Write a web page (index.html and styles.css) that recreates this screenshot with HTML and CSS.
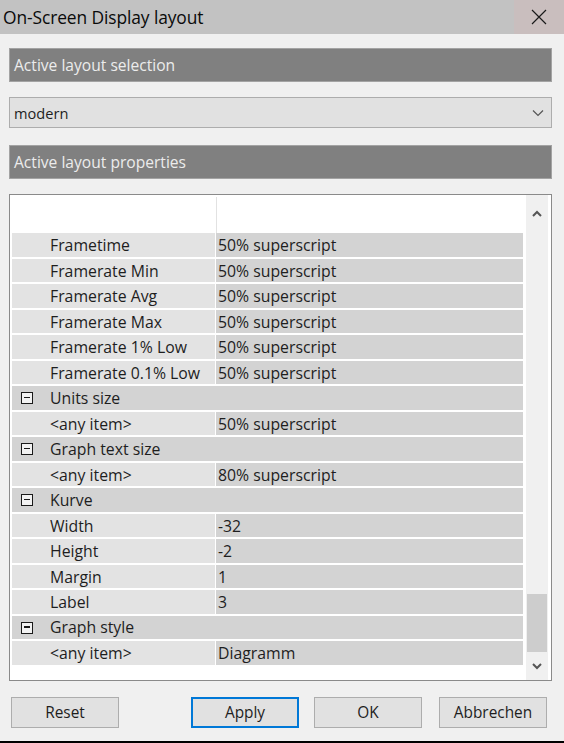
FILE: index.html
```html
<!DOCTYPE html>
<html>
<head>
<meta charset="utf-8">
<link rel="stylesheet" href="styles.css">
</head>
<body>
<div class="window">
  <div class="titlebar">
    <div class="title">On-Screen Display layout</div>
    <div class="close">
      <svg width="16" height="16" viewBox="0 0 16 16"><path d="M1 1 L15 15 M15 1 L1 15" stroke="#1a1a1a" stroke-width="1.2" fill="none"/></svg>
    </div>
  </div>
  <div class="content">
    <div class="section-header">Active layout selection</div>
    <div class="combo">
      <span class="combo-text">modern</span>
      <svg class="chev" width="12" height="8" viewBox="0 0 12 8"><path d="M1 1.5 L6 6.5 L11 1.5" stroke="#555" stroke-width="1.2" fill="none"/></svg>
    </div>
    <div class="section-header">Active layout properties</div>
    <div class="grid-box">
      <div class="rows">
        <div class="head-row"><div class="head-l"></div><div class="head-r"></div></div>
        <div class="row"><div class="lbl">Frametime</div><div class="val">50% superscript</div></div>
        <div class="row"><div class="lbl">Framerate Min</div><div class="val">50% superscript</div></div>
        <div class="row"><div class="lbl">Framerate Avg</div><div class="val">50% superscript</div></div>
        <div class="row"><div class="lbl">Framerate Max</div><div class="val">50% superscript</div></div>
        <div class="row"><div class="lbl">Framerate 1% Low</div><div class="val">50% superscript</div></div>
        <div class="row"><div class="lbl">Framerate 0.1% Low</div><div class="val">50% superscript</div></div>
        <div class="row group"><span class="exp"></span><span class="gname">Units size</span></div>
        <div class="row"><div class="lbl">&lt;any item&gt;</div><div class="val">50% superscript</div></div>
        <div class="row group"><span class="exp"></span><span class="gname">Graph text size</span></div>
        <div class="row"><div class="lbl">&lt;any item&gt;</div><div class="val">80% superscript</div></div>
        <div class="row group"><span class="exp"></span><span class="gname">Kurve</span></div>
        <div class="row"><div class="lbl">Width</div><div class="val">-32</div></div>
        <div class="row"><div class="lbl">Height</div><div class="val">-2</div></div>
        <div class="row"><div class="lbl">Margin</div><div class="val">1</div></div>
        <div class="row"><div class="lbl">Label</div><div class="val">3</div></div>
        <div class="row group"><span class="exp"></span><span class="gname">Graph style</span></div>
        <div class="row"><div class="lbl">&lt;any item&gt;</div><div class="val">Diagramm</div></div>
      </div>
      <div class="scrollbar">
        <div class="arrow up"><svg width="10" height="7" viewBox="0 0 10 7"><path d="M1 6 L5 2 L9 6" stroke="#555" stroke-width="2" fill="none"/></svg></div>
        <div class="track"><div class="thumb"></div></div>
        <div class="arrow down"><svg width="10" height="7" viewBox="0 0 10 7"><path d="M1 1 L5 5 L9 1" stroke="#555" stroke-width="2" fill="none"/></svg></div>
      </div>
    </div>
    <div class="buttons">
      <div class="btn">Reset</div>
      <div class="spacer"></div>
      <div class="btn primary">Apply</div>
      <div class="btn">OK</div>
      <div class="btn">Abbrechen</div>
    </div>
  </div>
  <div class="bottom-edge"></div>
</div>
</body>
</html>
```
FILE: styles.css
```css
* { box-sizing: border-box; }
html, body { margin: 0; padding: 0; }
body {
  width: 564px;
  height: 743px;
  overflow: hidden;
  background: #f0f0f0;
  font-family: "Open Sans", "Noto Sans", sans-serif;
  color: #1e1e1e;
}
.window { width: 564px; height: 743px; display: flex; flex-direction: column; }
.titlebar {
  height: 34px;
  background: #c2c2c2;
  display: flex;
  align-items: center;
  justify-content: space-between;
}
.title {
  padding-left: 3px;
  font-size: 17.4px;
  color: #0a0a0a;
  letter-spacing: -0.1px;
}
.close {
  width: 50px;
  height: 34px;
  background: #c9bebe;
  display: flex;
  align-items: center;
  justify-content: center;
}
.content {
  padding: 14px 12px 0 9px;
  display: flex;
  flex-direction: column;
  flex: 1;
}
.section-header {
  height: 34px;
  background: #808080;
  border: 1px solid #a3a3a3;
  color: #ececec;
  font-size: 15.6px;
  display: flex;
  align-items: center;
  padding-left: 4px;
}
.combo {
  margin-top: 15px;
  margin-bottom: 17px;
  height: 31px;
  background: #e1e1e1;
  border: 1px solid #adadad;
  display: flex;
  align-items: center;
  justify-content: space-between;
  padding: 0 7px 0 4px;
  font-size: 14.6px;
}
.grid-box {
  margin-top: 15px;
  height: 487px;
  background: #fff;
  border: 1px solid #8a8a8a;
  display: flex;
  padding: 0 3px 0 2px;
}
.rows { width: 511px; display: flex; flex-direction: column; }
.head-row { height: 38px; display: flex; }
.head-l { width: 204px; }
.head-r { border-left: 1px solid #e2e2e2; margin-top: 2px; flex: 1; }
.row {
  height: 23.5px;
  margin-top: 2px;
  display: flex;
  font-size: 15.8px;
  line-height: 25.5px;
}
.row:nth-child(2) { margin-top: 0; }
.lbl {
  width: 203px;
  background: #e3e3e3;
  padding-left: 38px;
  white-space: nowrap;
}
.val {
  margin-left: 1px;
  flex: 1;
  background: #d3d3d3;
  padding-left: 2px;
  white-space: nowrap;
}
.row.group { background: #d3d3d3; align-items: center; padding-top: 1px; }
.gname { line-height: 23.5px; }
.exp {
  width: 12px;
  height: 12px;
  border: 1.5px solid #1a1a1a;
  margin-left: 9px;
  margin-right: 17px;
  position: relative;
  background: #f2f2f2;
}
.exp::after {
  content: "";
  position: absolute;
  left: 2px; right: 2px; top: 3.5px;
  height: 1.5px;
  background: #1a1a1a;
}
.scrollbar {
  margin-left: 3px;
  width: 22px;
  background: #f0f0f0;
  display: flex;
  flex-direction: column;
}
.arrow { display: flex; align-items: center; justify-content: center; }
.arrow.up { height: 36px; }
.arrow.down { height: 28px; }
.track { flex: 1; display: flex; flex-direction: column; justify-content: flex-end; }
.thumb { height: 58px; background: #cdcdcd; margin: 0 1px; }
.buttons {
  margin-top: 16px;
  display: flex;
  padding-left: 2px;
  gap: 15px;
}
.spacer { width: 57px; }
.btn {
  width: 108px;
  height: 31px;
  background: #e1e1e1;
  border: 1px solid #adadad;
  display: flex;
  align-items: center;
  justify-content: center;
  font-size: 15.4px;
}
.btn:nth-child(5) { margin-left: 2px; }
.btn.primary { border: 2px solid #0078d7; }
.spacer + .btn { margin-left: -15px; }
.bottom-edge { height: 2px; background: #000; }
```
